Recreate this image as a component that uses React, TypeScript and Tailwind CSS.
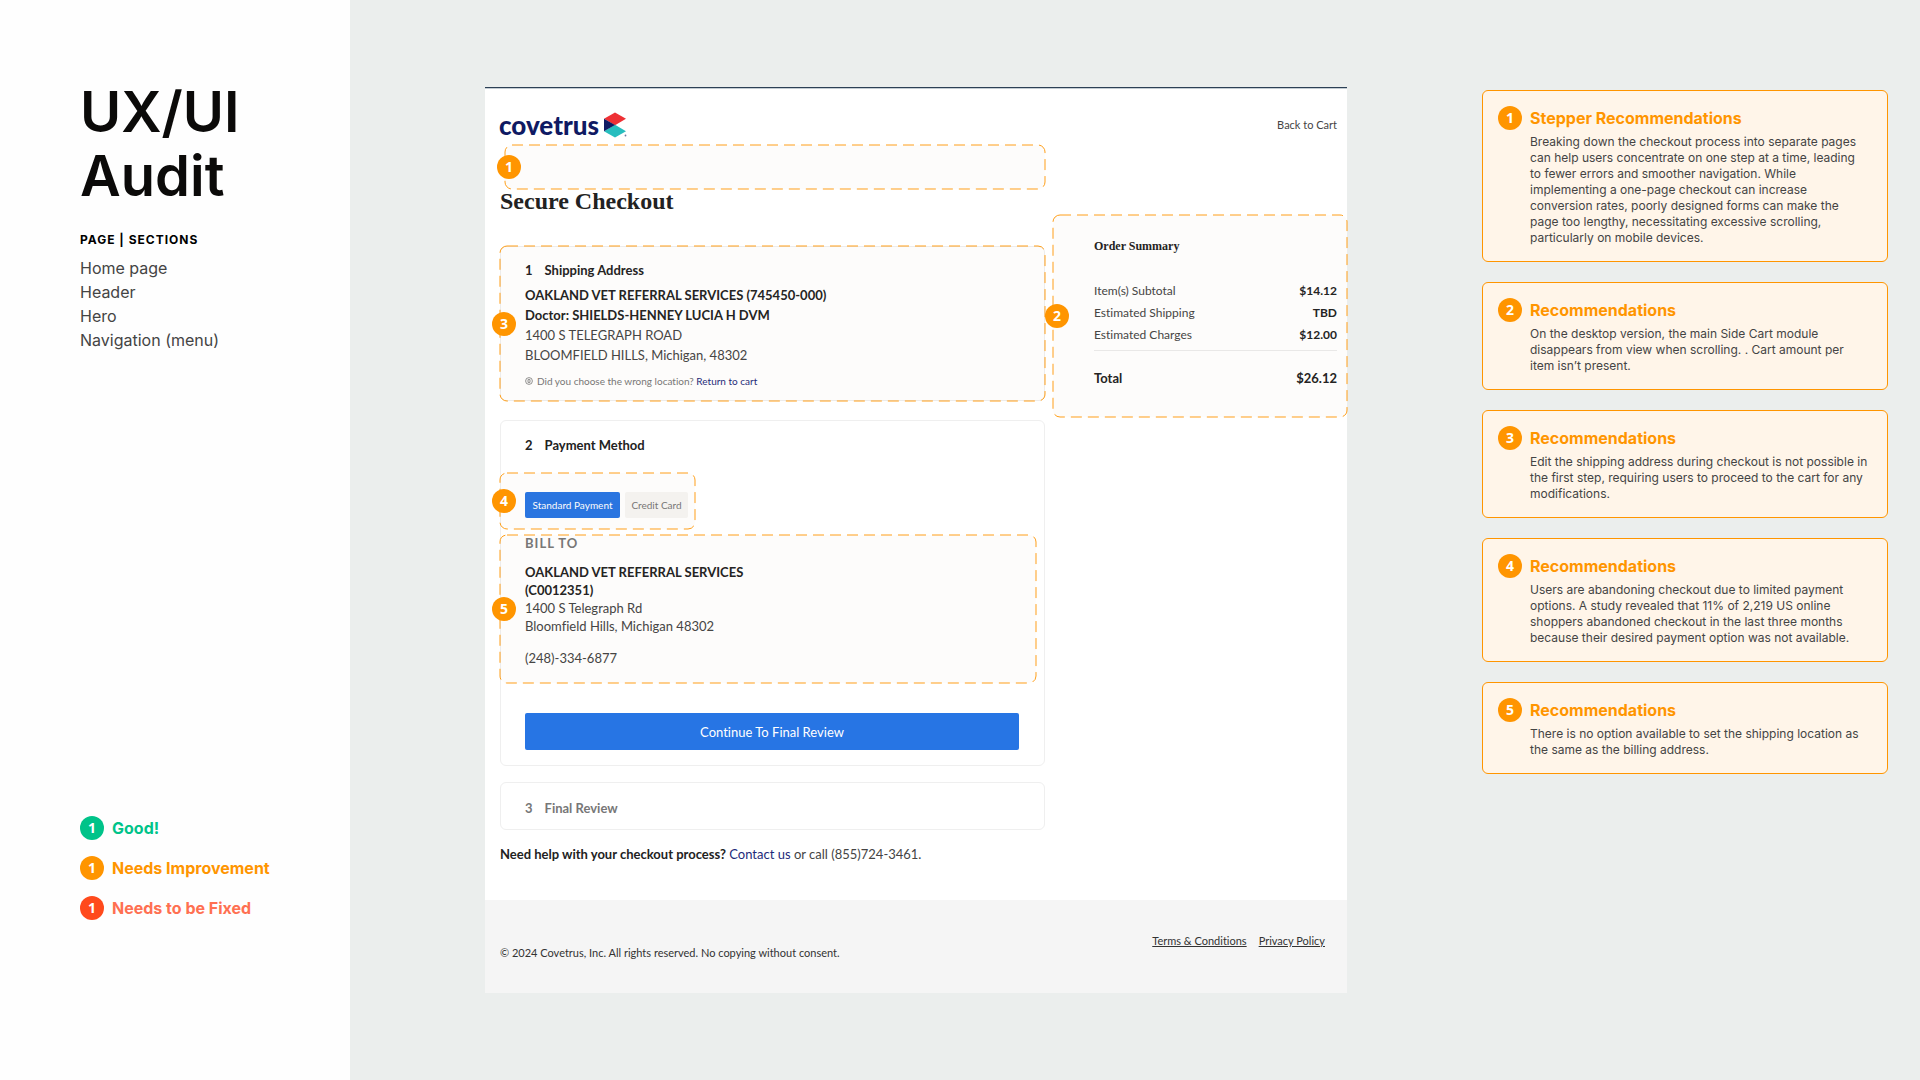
import type { ReactNode } from "react"
import clsx from "clsx"

const sections = ["Home page", "Header", "Hero", "Navigation (menu)"]

const legend = [
  { label: "Good!", badge: "bg-[#00c389]", text: "text-[#00c389]" },
  { label: "Needs Improvement", badge: "bg-[#ff9500]", text: "text-[#ff9500]" },
  { label: "Needs to be Fixed", badge: "bg-[#ff4a1c]", text: "text-[#ff7051]" },
]

const recommendations = [
  {
    title: "Stepper Recommendations",
    body: "Breaking down the checkout process into separate pages can help users concentrate on one step at a time, leading to fewer errors and smoother navigation. While implementing a one-page checkout can increase conversion rates, poorly designed forms can make the page too lengthy, necessitating excessive scrolling, particularly on mobile devices.",
    inset: true,
  },
  {
    title: "Recommendations",
    body: "On the desktop version, the main Side Cart module disappears from view when scrolling. . Cart amount per item isn’t present.",
    inset: true,
  },
  {
    title: "Recommendations",
    body: "Edit the shipping address during checkout is not possible in the first step, requiring users to proceed to the cart for any modifications.",
  },
  {
    title: "Recommendations",
    body: "Users are abandoning checkout due to limited payment options. A study revealed that 11% of 2,219 US online shoppers abandoned checkout in the last three months because their desired payment option was not available.",
  },
  {
    title: "Recommendations",
    body: "There is no option available to set the shipping location as the same as the billing address.",
  },
]

const charges = [
  { label: "Item(s) Subtotal", value: "$14.12" },
  { label: "Estimated Shipping", value: "TBD" },
  { label: "Estimated Charges", value: "$12.00" },
]

function Badge({ n, className = "bg-[#ff9500]" }: { n: number; className?: string }) {
  return (
    <span
      className={clsx(
        "flex size-6 shrink-0 items-center justify-center rounded-full font-['Open_Sans',sans-serif] text-sm leading-none font-bold text-white",
        className
      )}
    >
      {n}
    </span>
  )
}

// Dashed highlight with its number, drawn over whatever it wraps
function Annotated({ n, className, children }: { n: number; className?: string; children?: ReactNode }) {
  return (
    <div className={clsx("relative", className)}>
      {children}
      <svg className="pointer-events-none absolute inset-0 size-full overflow-visible" aria-hidden="true">
        <rect
          width="100%"
          height="100%"
          rx="7"
          fill="#a07840"
          fillOpacity="0.025"
          stroke="#ff9500"
          strokeOpacity="0.9"
          strokeDasharray="11 6"
        />
      </svg>
      <div className="absolute top-1/2 -left-2 -translate-y-1/2">
        <Badge n={n} />
      </div>
    </div>
  )
}

function Sidebar() {
  return (
    <aside className="flex w-[350px] shrink-0 flex-col justify-between bg-[#fefefe] px-20 pt-20 pb-40">
      <div>
        <h1 className="text-[56px] leading-[64px] font-semibold text-[#0b0a09]">UX/UI Audit</h1>
        <h2 className="mt-6 text-xs font-bold tracking-[1px] whitespace-nowrap text-black">PAGE | SECTIONS</h2>
        <ul className="mt-2 text-base whitespace-nowrap text-[#444]">
          {sections.map((section) => (
            <li key={section}>{section}</li>
          ))}
        </ul>
      </div>
      <ul className="space-y-4">
        {legend.map((item) => (
          <li key={item.label} className="flex items-center gap-2">
            <Badge n={1} className={item.badge} />
            <span className={clsx("font-bold whitespace-nowrap", item.text)}>{item.label}</span>
          </li>
        ))}
      </ul>
    </aside>
  )
}

function Logo() {
  return (
    <div className="flex items-center gap-[5px]">
      <span className="text-[26px] leading-[26px] font-black text-[#0f1a63]">covetrus</span>
      <svg className="h-[26px] w-[23px]" viewBox="0 0 23 26" aria-hidden="true">
        <path d="M0 6.8 11 0.6 22 6.8 11 13.2Z" fill="#ee3034" />
        <path d="M0 19.2 11 12.8 22 19.2 11 25.6Z" fill="#27bdbe" />
        <path d="M0 6.8 11 13 0 19.2Z" fill="#0f1a63" />
        <circle cx="21.5" cy="23.5" r="0.9" fill="#6f76a3" />
      </svg>
    </div>
  )
}

function StepHeading({ n, children }: { n: number; children: ReactNode }) {
  return (
    <h3 className="flex gap-3 font-bold">
      <span>{n}</span>
      {children}
    </h3>
  )
}

function ShippingAddress() {
  return (
    <Annotated n={3} className="mt-[33px]">
      <section className="rounded-md border border-[#efefef] px-6 pt-[13px] pb-[11px]">
        <StepHeading n={1}>Shipping Address</StepHeading>
        <address className="mt-[5px] not-italic">
          <p className="font-bold">OAKLAND VET REFERRAL SERVICES (745450-000)</p>
          <p className="font-bold">Doctor: SHIELDS-HENNEY LUCIA H DVM</p>
          <p className="text-[#444]">1400 S TELEGRAPH ROAD</p>
          <p className="text-[#444]">BLOOMFIELD HILLS, Michigan, 48302</p>
        </address>
        <p className="mt-2 flex items-center gap-1 text-[10px] leading-4 text-[#777]">
          <svg className="size-2" viewBox="0 0 8 8" fill="none" stroke="#777" strokeWidth="0.8" aria-hidden="true">
            <circle cx="4" cy="4" r="3.4" />
            <path d="M3 2.6h2v2.8H3z" />
          </svg>
          <span>
            Did you choose the wrong location?{" "}
            <a href="#cart" className="text-[#1d2a7a]">
              Return to cart
            </a>
          </span>
        </p>
      </section>
    </Annotated>
  )
}

function PaymentMethod() {
  return (
    <section className="mt-[19px] rounded-md border border-[#efefef] pt-[14px] pb-[15px]">
      <div className="px-6">
        <StepHeading n={2}>Payment Method</StepHeading>
      </div>
      <Annotated n={4} className="-ml-px mt-[18px] w-[195px]">
        <div className="flex gap-[5px] pt-[19px] pb-[11px] pl-[25px] text-[10px]">
          <button className="h-[26px] w-[95px] rounded-xs bg-[#2775e4] text-white">Standard Payment</button>
          <button className="h-[26px] w-[63px] rounded-xs bg-[#f6f5f3] text-[#777]">Credit Card</button>
        </div>
      </Annotated>
      <Annotated n={5} className="-ml-px mt-1.5 mr-2">
        <div className="pb-4 pl-[25px] leading-[18px]">
          <h4 className="text-[13px] leading-4 font-bold tracking-[1px] text-[#777]">BILL TO</h4>
          <address className="mt-3 not-italic">
            <p className="font-bold">OAKLAND VET REFERRAL SERVICES</p>
            <p className="font-bold">(C0012351)</p>
            <p className="text-[#444]">1400 S Telegraph Rd</p>
            <p className="text-[#444]">Bloomfield Hills, Michigan 48302</p>
            <p className="mt-[14px] text-[#444]">(248)-334-6877</p>
          </address>
        </div>
      </Annotated>
      <div className="mt-[30px] pr-[25px] pl-6">
        <button className="h-[37px] w-full rounded-xs bg-[#2775e4] text-white">Continue To Final Review</button>
      </div>
    </section>
  )
}

function OrderSummary() {
  return (
    <Annotated n={2} className="mt-[70px] w-[294px] shrink-0 self-start">
      <section className="pt-[23px] pr-[10px] pb-[29px] pl-[41px]">
        <h3 className="font-['Liberation_Serif',serif] text-[12px] leading-4 font-bold">Order Summary</h3>
        <dl className="mt-[26px] border-b border-[#ebebeb] pb-1 text-[12px] leading-[22px]">
          {charges.map((row) => (
            <div key={row.label} className="flex justify-between">
              <dt className="text-[#444]">{row.label}</dt>
              <dd className="font-bold">{row.value}</dd>
            </div>
          ))}
        </dl>
        <p className="mt-[17px] flex justify-between font-bold">
          <span>Total</span>
          <span>$26.12</span>
        </p>
      </section>
    </Annotated>
  )
}

function CheckoutPage() {
  return (
    <div className="flex-1 border-t border-[#2c4055] bg-white font-[Lato,sans-serif] text-[13px] leading-5 text-[#222] inset-shadow-[0_1px_0_#c3ccd3] [font-variant-ligatures:none]">
      <header className="flex items-center justify-between pt-6 pr-[10px] pb-[7px] pl-[14px]">
        <Logo />
        <a href="#cart" className="text-[11px] text-[#444]">
          Back to Cart
        </a>
      </header>
      <div className="flex gap-2 pl-[15px]">
        <div className="flex-1">
          <Annotated n={1} className="ml-[5px] h-11" />
          <h2 className="font-['Liberation_Serif',serif] text-2xl leading-6 font-bold">Secure Checkout</h2>
          <ShippingAddress />
          <PaymentMethod />
          <section className="mt-4 rounded-md border border-[#efefef] px-6 pt-[15px] pb-[11px] text-[#777]">
            <StepHeading n={3}>Final Review</StepHeading>
          </section>
          <p className="mt-[14px] text-[#444]">
            <strong className="text-[#222]">Need help with your checkout process?</strong>{" "}
            <a href="#contact" className="text-[#1d2a7a]">
              Contact us
            </a>{" "}
            or call (855)724-3461.
          </p>
        </div>
        <OrderSummary />
      </div>
      <footer className="mt-9 flex items-start justify-between bg-[#f5f5f5] pr-[22px] pb-[31px] pl-[15px] text-[11px] leading-[18px] text-[#333]">
        <p className="pt-11">© 2024 Covetrus, Inc. All rights reserved. No copying without consent.</p>
        <nav className="flex gap-3 pt-8">
          <a href="#terms" className="underline">
            Terms &amp; Conditions
          </a>
          <a href="#privacy" className="underline">
            Privacy Policy
          </a>
        </nav>
      </footer>
    </div>
  )
}

export default function App() {
  return (
    <div className="flex min-h-screen bg-[#ebeeed] font-[Inter,sans-serif]">
      <Sidebar />
      <main className="flex flex-1 items-start px-[135px] pt-[87px]">
        <CheckoutPage />
      </main>
      <div className="mr-8 flex w-[406px] shrink-0 flex-col gap-5 pt-[90px]">
        {recommendations.map((item, i) => (
          <article key={i} className="rounded-md border border-[#ff9500] bg-[#fff5e9] p-[15px]">
            <div className="flex items-center gap-2">
              <Badge n={i + 1} />
              <h3 className="font-bold text-[#ff9500]">{item.title}</h3>
            </div>
            <p className={clsx("mt-1 pl-8 text-xs text-[#444]", item.inset && "pr-2")}>{item.body}</p>
          </article>
        ))}
      </div>
    </div>
  )
}
